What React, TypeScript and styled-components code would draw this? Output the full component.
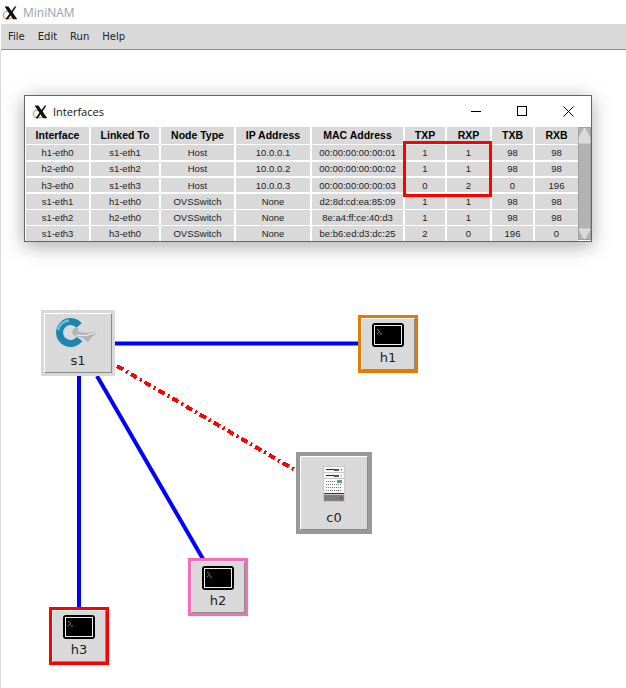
import React from "react";
import styled, { createGlobalStyle } from "styled-components";

const Global = createGlobalStyle`
    html, body {
        margin: 0;
        padding: 0;
        background: #fff;
    }
`

const Page = styled.div`
    width: 626px;
    height: 688px;
    display: flex;
    flex-direction: column;
    overflow: hidden;
    background: #fff;
`
const AppTitle = styled.div`
    height: 24px;
    display: flex;
    align-items: center;
    gap: 4px;
    padding-left: 2px;
    font: 12px "Open Sans", sans-serif;
    color: #9a9fa8;
`
const MenuBar = styled.div`
    height: 25px;
    margin-left: 1px;
    display: flex;
    align-items: center;
    gap: 13px;
    padding-left: 7px;
    background: #d9d9d9;
    border-bottom: 1px solid #8e8e8e;
    font: 10px "DejaVu Sans", sans-serif;
    color: #222;
`
const Canvas = styled.div`
    position: relative;
    flex: 1;
    border-left: 1px solid #d9d9d9;
`
const Links = styled.svg`
    position: absolute;
    left: -1px;
    top: -50px;
`
const Win = styled.div`
    position: absolute;
    left: 23px;
    top: 45px;
    width: 566px;
    height: 145px;
    display: flex;
    flex-direction: column;
    background: #fff;
    border: 1px solid #666;
    box-shadow: 0 4px 18px rgba(0, 0, 0, 0.35);
`
const WinTitle = styled.div`
    height: 31px;
    display: flex;
    align-items: center;
    gap: 4px;
    padding-left: 7px;
    font: 11px "Open Sans", sans-serif;
    color: #111;
`
const WinButtons = styled.div`
    margin-left: auto;
    display: flex;
    align-items: center;
    gap: 35px;
    padding-right: 17px;
`
const Body = styled.div`
    display: flex;
    padding-left: 1px;
`
const Grid = styled.div`
    width: 552px;
    display: grid;
    grid-template-columns: 63px 68px 73px 74px 91px 40px 43px 41px 43px;
    grid-template-rows: 17px repeat(6, 14.6px);
    gap: 1.6px 2px;
`
const Cell = styled.div<{ $head?: boolean }>`
    display: flex;
    align-items: center;
    justify-content: center;
    background: #d9d9d9;
    color: ${p => (p.$head ? "#000" : "#222")};
    font: ${p => (p.$head ? "bold 10.5px" : "9.5px")} "Liberation Sans", sans-serif;
    white-space: nowrap;
`
const Scroll = styled.div`
    width: 13px;
    height: 113px;
    background: #b3b3b3;
    box-shadow: inset 0 0 0 1px #a0a0a0;
`
const Highlight = styled.div`
    position: absolute;
    left: 402px;
    top: 91px;
    width: 89px;
    height: 56px;
    box-sizing: border-box;
    border: 3px solid #f00;
`
const Node = styled.div<{ $x: number; $y: number; $w: number; $h: number; $color: string; $border: number }>`
    position: absolute;
    left: ${p => p.$x - 1}px;
    top: ${p => p.$y - 50}px;
    width: ${p => p.$w}px;
    height: ${p => p.$h}px;
    box-sizing: border-box;
    border: ${p => p.$border}px solid ${p => p.$color};
    background: #d9d9d9;
`
const NodeFace = styled.div<{ $top?: number }>`
    height: 100%;
    box-sizing: border-box;
    display: flex;
    flex-direction: column;
    align-items: center;
    justify-content: space-between;
    padding: ${p => p.$top ?? 4}px 0 4px;
    border-top: 1px solid #fff;
    border-left: 1px solid #fff;
    border-right: 1px solid #8a8a8a;
    border-bottom: 1px solid #8a8a8a;
    font: 13px/15px "DejaVu Sans", sans-serif;
    color: #222;
`

const XLogo = ({ size }: { size: number }) => (
    <svg width={size} height={size} viewBox="0 0 20 20">
        <ellipse cx="7.5" cy="13" rx="6" ry="4.5" fill="none" stroke="#ea9455" strokeWidth="1.5" />
        <path d="M3 3 L7.5 3 L18 18 L13 18 Z" fill="#111" />
        <path d="M15 3 L17 3 L7 18 L4 18 Z" fill="#111" />
    </svg>
)

const Terminal = () => (
    <svg width="32" height="24" viewBox="0 0 32 24">
        <rect x="0" y="0" width="32" height="24" rx="3" fill="#000" />
        <rect x="2.5" y="2.5" width="27" height="19" fill="#000" stroke="#f0f0f0" strokeWidth="1" />
        <path d="M5 6 L8 8.5 L5 11 M8 11 H10" fill="none" stroke="#1ec21e" strokeWidth="1" />
    </svg>
)

const SwitchIcon = () => (
    <svg width="46" height="30" viewBox="0 0 46 30">
        <path d="M24 7.5 A11 11 0 1 0 24.5 21" fill="none" stroke="#1c86b0" strokeWidth="7" />
        <path d="M3 12 A12.5 12.5 0 0 1 14 2.5" fill="none" stroke="#6fc0dc" strokeWidth="2.5" />
        <path d="M19 10 Q15 15 20 18 L28 20 L33 24 L37 19 L45 13 L31 15 L24 14 Q22 12 24 10 Z" fill="#b0b4b6" />
        <path d="M21 17 L31 17.5 L43 14" fill="none" stroke="#f0f0f0" strokeWidth="1.2" />
    </svg>
)

const ServerIcon = () => (
    <svg width="22" height="36" viewBox="0 0 22 36">
        <rect x="0" y="0" width="22" height="36" fill="#c9c9c9" />
        <rect x="1" y="1" width="20" height="5" fill="#f7f7f7" />
        <rect x="3" y="3" width="13" height="1" fill="#222" />
        <rect x="11" y="3" width="5" height="2" fill="#555" />
        <rect x="18" y="3" width="1" height="1" fill="#e02020" />
        <rect x="1" y="7" width="20" height="5" fill="#f7f7f7" />
        <rect x="3" y="9" width="13" height="1" fill="#222" />
        <rect x="11" y="9" width="5" height="2" fill="#555" />
        <rect x="18" y="9" width="1" height="1" fill="#60d020" />
        <rect x="1" y="13" width="20" height="14" fill="#fafafa" />
        <path d="M3 15.5h9M3 18.5h16M3 21.5h16M3 24.5h16" stroke="#777" strokeWidth="1" strokeDasharray="1 1" />
        <rect x="14" y="14" width="5" height="3" fill="#5fa36a" />
        <rect x="1" y="27" width="20" height="1" fill="#333" />
        <rect x="1" y="29" width="20" height="6" fill="#7d7d7d" />
        <rect x="17" y="31" width="2" height="2" fill="#c03020" />
    </svg>
)

const Minimize = () => (
    <svg width="11" height="11" viewBox="0 0 11 11">
        <path d="M0 5.5 H10" stroke="#000" strokeWidth="1" />
    </svg>
)
const Maximize = () => (
    <svg width="11" height="11" viewBox="0 0 11 11">
        <rect x="0.5" y="0.5" width="9" height="9" fill="none" stroke="#000" strokeWidth="1" />
    </svg>
)
const Close = () => (
    <svg width="11" height="11" viewBox="0 0 11 11">
        <path d="M0.5 0.5 L10.5 10.5 M10.5 0.5 L0.5 10.5" stroke="#000" strokeWidth="1" />
    </svg>
)

const ScrollBar = () => (
    <Scroll>
        <svg width="13" height="113" viewBox="0 0 13 113">
            <path d="M6.5 1 L12 11 H1 Z" fill="#d9d9d9" stroke="#eee" strokeWidth="0.7" />
            <rect x="1" y="12" width="11" height="4" fill="#d9d9d9" stroke="#eee" strokeWidth="0.7" />
            <path d="M6.5 112 L12 102 H1 Z" fill="#d9d9d9" stroke="#eee" strokeWidth="0.7" />
        </svg>
    </Scroll>
)

const headers = ["Interface", "Linked To", "Node Type", "IP Address", "MAC Address", "TXP", "RXP", "TXB", "RXB"];
const rows = [
    ["h1-eth0", "s1-eth1", "Host", "10.0.0.1", "00:00:00:00:00:01", "1", "1", "98", "98"],
    ["h2-eth0", "s1-eth2", "Host", "10.0.0.2", "00:00:00:00:00:02", "1", "1", "98", "98"],
    ["h3-eth0", "s1-eth3", "Host", "10.0.0.3", "00:00:00:00:00:03", "0", "2", "0", "196"],
    ["s1-eth1", "h1-eth0", "OVSSwitch", "None", "d2:8d:cd:ea:85:09", "1", "1", "98", "98"],
    ["s1-eth2", "h2-eth0", "OVSSwitch", "None", "8e:a4:ff:ce:40:d3", "1", "1", "98", "98"],
    ["s1-eth3", "h3-eth0", "OVSSwitch", "None", "be:b6:ed:d3:dc:25", "2", "0", "196", "0"],
];

const App: React.FC = () => {
    return (
        <Page>
            <Global />
            <AppTitle>
                <XLogo size={17} />
                MiniNAM
            </AppTitle>
            <MenuBar>
                <span>File</span>
                <span>Edit</span>
                <span>Run</span>
                <span>Help</span>
            </MenuBar>
            <Canvas>
                <Links width="626" height="688">
                    <path d="M112 343.5 H360" stroke="#0000ff" strokeWidth="4" />
                    <path d="M79 374 V610" stroke="#0000ff" strokeWidth="4" />
                    <path d="M97 376 L203 559" stroke="#0000ff" strokeWidth="4" />
                    <path d="M117 366 L295 470" stroke="#f00" strokeWidth="4" strokeDasharray="7 3.5 2 3.5" shapeRendering="crispEdges" />
                </Links>
                <Win>
                    <WinTitle>
                        <XLogo size={17} />
                        Interfaces
                        <WinButtons>
                            <Minimize />
                            <Maximize />
                            <Close />
                        </WinButtons>
                    </WinTitle>
                    <Body>
                        <Grid>
                            {headers.map(h => <Cell key={h} $head>{h}</Cell>)}
                            {rows.flat().map((v, i) => <Cell key={i}>{v}</Cell>)}
                        </Grid>
                        <ScrollBar />
                    </Body>
                </Win>
                <Highlight />
                <Node $x={41} $y={310} $w={74} $h={66} $color="#d9d9d9" $border={3}>
                    <NodeFace>
                        <SwitchIcon />
                        s1
                    </NodeFace>
                </Node>
                <Node $x={358} $y={315} $w={60} $h={58} $color="#e67a00" $border={3}>
                    <NodeFace>
                        <Terminal />
                        h1
                    </NodeFace>
                </Node>
                <Node $x={296} $y={452} $w={76} $h={82} $color="#999" $border={4}>
                    <NodeFace $top={9}>
                        <ServerIcon />
                        c0
                    </NodeFace>
                </Node>
                <Node $x={188} $y={558} $w={60} $h={58} $color="#ff69b4" $border={3}>
                    <NodeFace>
                        <Terminal />
                        h2
                    </NodeFace>
                </Node>
                <Node $x={49} $y={607} $w={60} $h={58} $color="#f00" $border={3}>
                    <NodeFace>
                        <Terminal />
                        h3
                    </NodeFace>
                </Node>
            </Canvas>
        </Page>
    )
}

export default App;
